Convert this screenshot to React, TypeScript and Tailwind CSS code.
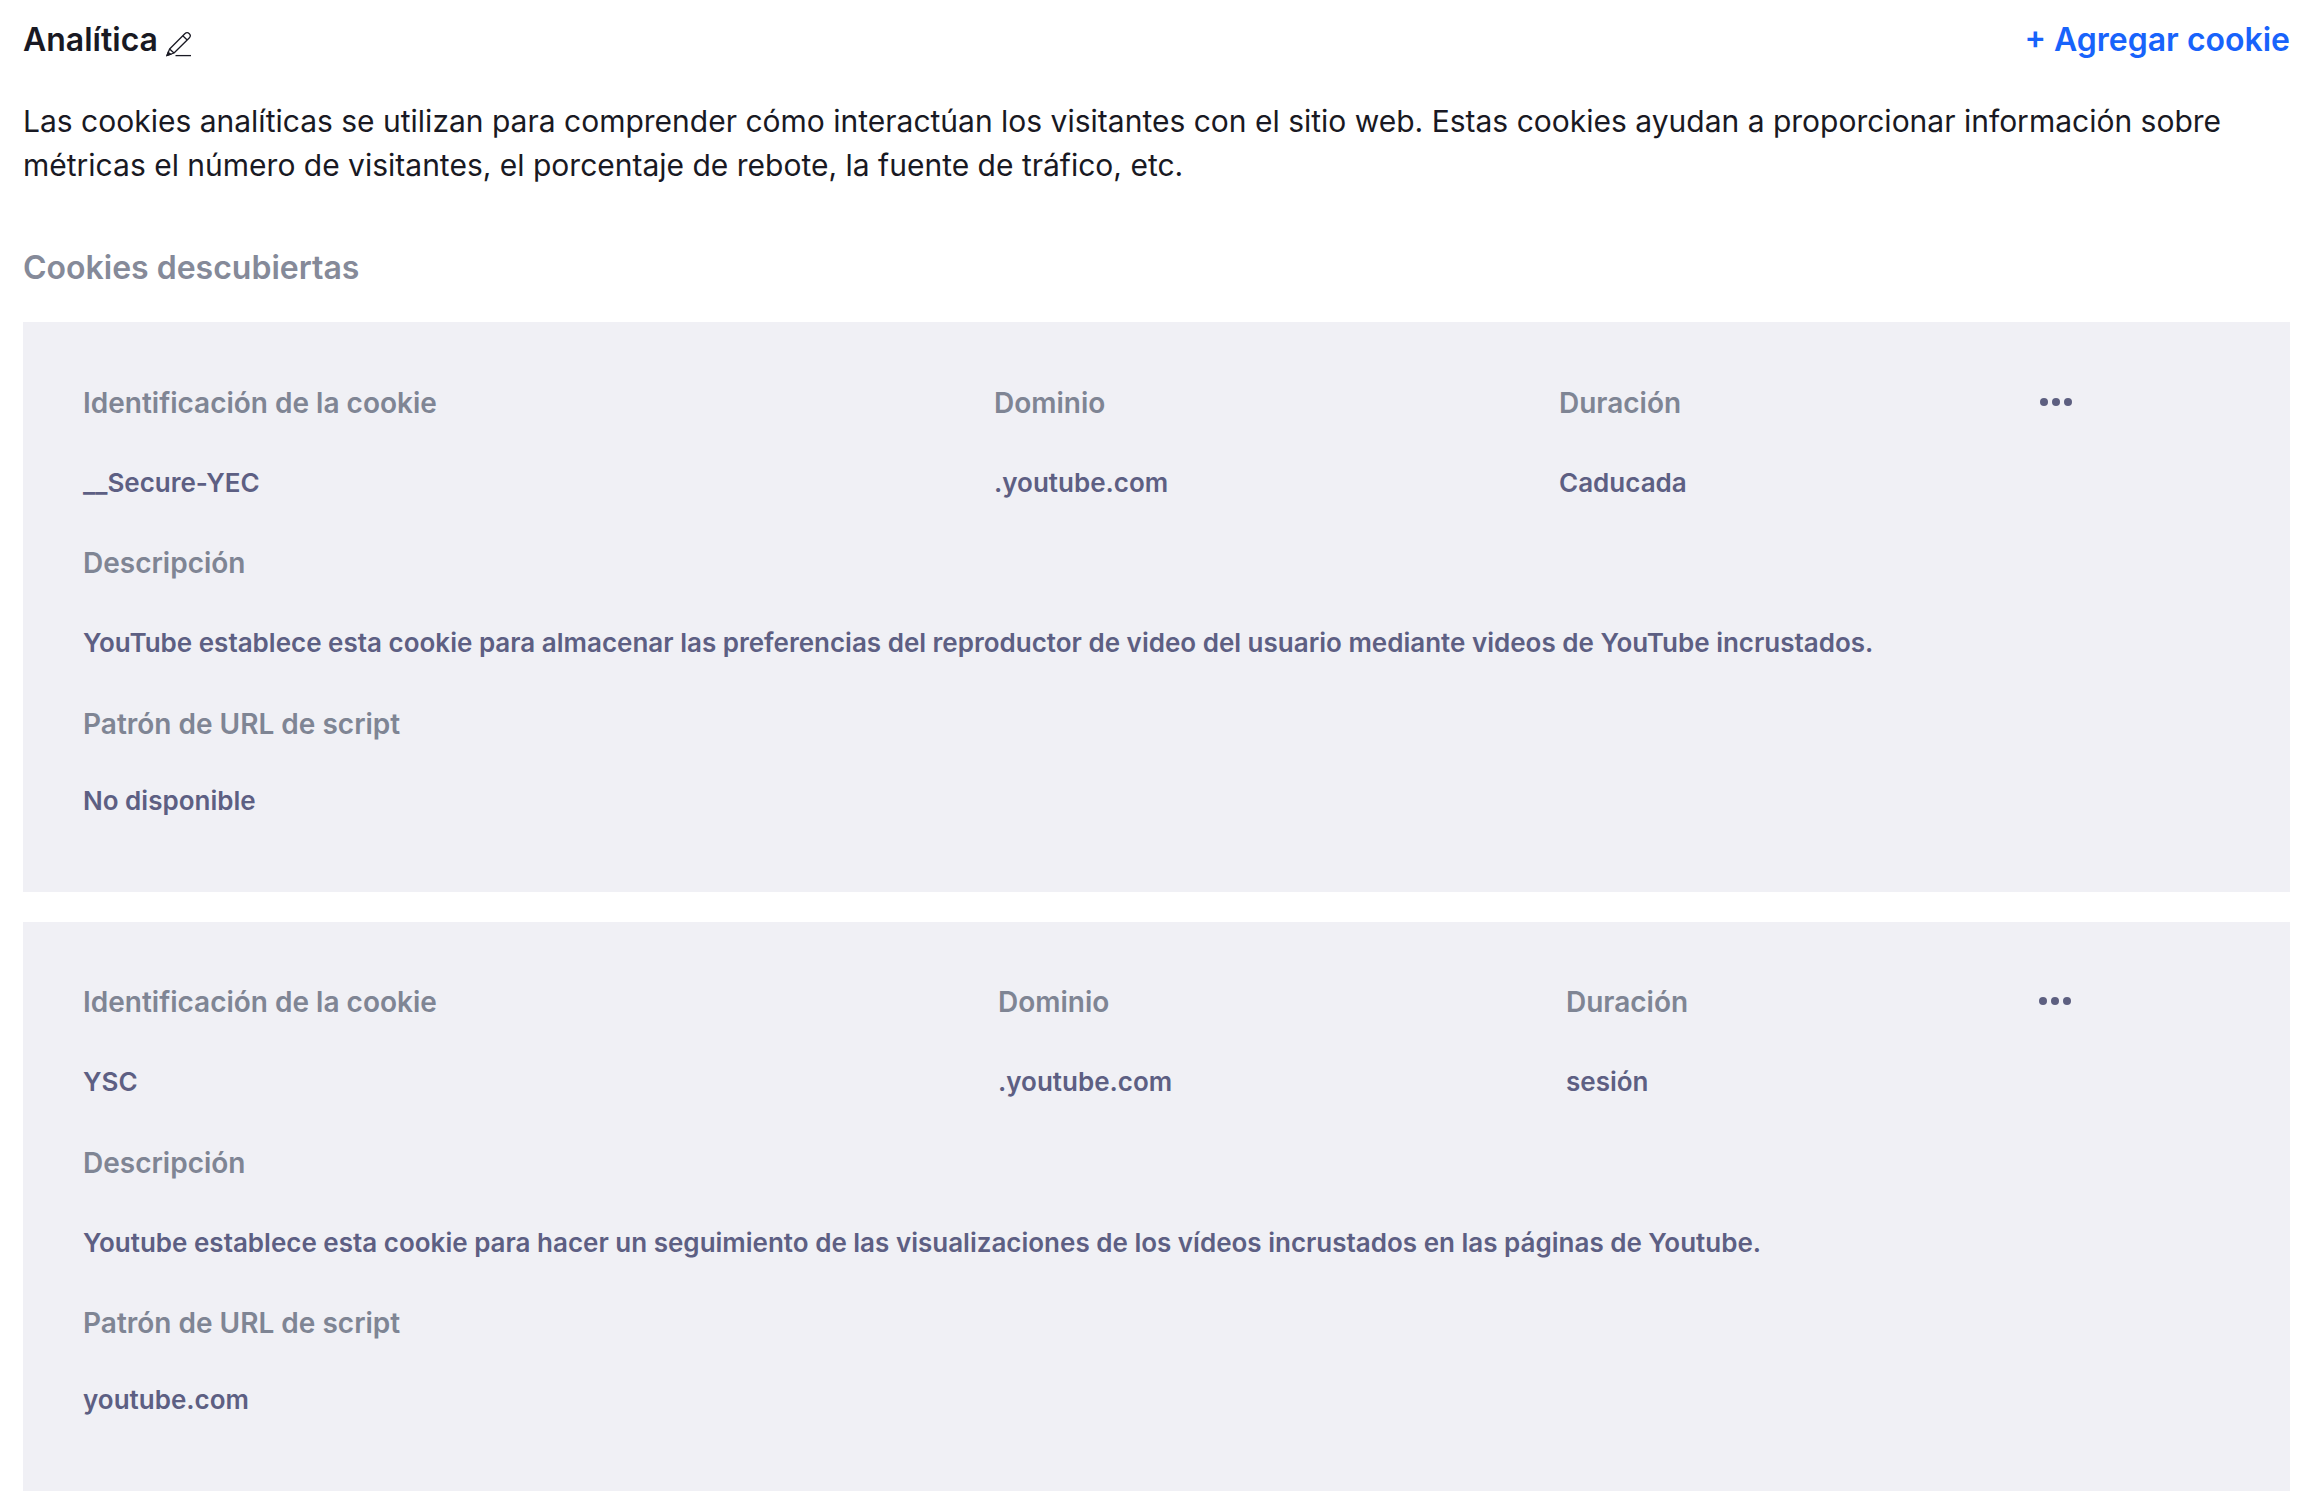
import React from 'react';

type Cookie = {
  id: string;
  duration: string;
  description: string;
  pattern: string;
  cols: string;
  box: string;
  middle: string;
  patternLabel: string;
};

const cookies: Cookie[] = [
  {
    id: '__Secure-YEC',
    duration: 'Caducada',
    description:
      'YouTube establece esta cookie para almacenar las preferencias del reproductor de video del usuario mediante videos de YouTube incrustados.',
    pattern: 'No disponible',
    cols: 'grid-cols-[911px_565px_481px_1fr]',
    box: 'pt-[61px] h-[570px]',
    middle: 'mt-[40px]',
    patternLabel: 'mt-[1px]',
  },
  {
    id: 'YSC',
    duration: 'sesión',
    description:
      'Youtube establece esta cookie para hacer un seguimiento de las visualizaciones de los vídeos incrustados en las páginas de Youtube.',
    pattern: 'youtube.com',
    cols: 'grid-cols-[915px_568px_473px_1fr]',
    box: 'pt-[60px] h-[569px]',
    middle: 'mt-[41px]',
    patternLabel: 'mt-0',
  },
];

function PencilIcon() {
  return (
    <svg width="26" height="26" viewBox="0 0 26 26" fill="none" stroke="#1a1a24" strokeWidth="1.3" className="mt-[8px]">
      <path d="M1 24.5 L3.6 18 L18.8 2.8 C20.2 1.4 22 1.4 23.3 2.7 C24.6 4 24.5 5.7 23.2 7 L8 22 Z" strokeLinejoin="round" />
      <path d="M3.6 18 L8 22" />
      <path d="M16.8 4.8 L21.2 9" />
      <path d="M1 24.5 L2.2 21.4 L4.6 23.2 Z" fill="#1a1a24" />
      <path d="M9.5 24.6 H25" />
    </svg>
  );
}

function Label({ children }: { children: React.ReactNode }) {
  return <p className="text-[28px] leading-[40px] font-semibold text-[#7f8594]">{children}</p>;
}

function Value({ children }: { children: React.ReactNode }) {
  return <p className="text-[26px] leading-[40px] font-semibold text-[#5d5f83]">{children}</p>;
}

function CookieCard({ cookie }: { cookie: Cookie }) {
  return (
    <div className={`bg-[#f0f0f5] px-[60px] ${cookie.box}`}>
      <div className={`grid ${cookie.cols} gap-y-[40px]`}>
        <Label>Identificación de la cookie</Label>
        <Label>Dominio</Label>
        <Label>Duración</Label>
        <div className="flex items-center gap-[4px] h-[40px] pb-[2px]">
          <span className="w-[8px] h-[8px] rounded-full bg-[#5d5f80]" />
          <span className="w-[8px] h-[8px] rounded-full bg-[#5d5f80]" />
          <span className="w-[8px] h-[8px] rounded-full bg-[#5d5f80]" />
        </div>
        <Value>{cookie.id}</Value>
        <Value>.youtube.com</Value>
        <Value>{cookie.duration}</Value>
        <div />
      </div>
      <div className={`flex flex-col gap-[40px] ${cookie.middle}`}>
        <Label>Descripción</Label>
        <Value>{cookie.description}</Value>
        <div className={cookie.patternLabel}>
          <Label>Patrón de URL de script</Label>
        </div>
        <div className="-mt-[3px]">
          <Value>{cookie.pattern}</Value>
        </div>
      </div>
    </div>
  );
}

export default function App() {
  return (
    <div className="bg-white min-h-[1504px] pl-[23px] pr-[26px] pt-[18px] font-['Inter',sans-serif]">
      <div className="flex items-center justify-between h-[44px]">
        <div className="flex items-center gap-[8px]">
          <h2 className="text-[32px] font-semibold text-[#191923]">Analítica</h2>
          <PencilIcon />
        </div>
        <button className="text-[32px] font-semibold text-[#1863fb]">+ Agregar cookie</button>
      </div>
      <p className="mt-[37px] text-[30px] leading-[44px] text-[#191923]">
        Las cookies analíticas se utilizan para comprender cómo interactúan los visitantes con el sitio web. Estas cookies ayudan a proporcionar información sobre métricas el número de visitantes, el porcentaje de rebote, la fuente de tráfico, etc.
      </p>
      <h3 className="mt-[59px] text-[32px] leading-[44px] font-semibold text-[#858a99]">Cookies descubiertas</h3>
      <div className="mt-[32px] flex flex-col gap-[30px]">
        {cookies.map((cookie) => (
          <CookieCard key={cookie.id} cookie={cookie} />
        ))}
      </div>
    </div>
  );
}
